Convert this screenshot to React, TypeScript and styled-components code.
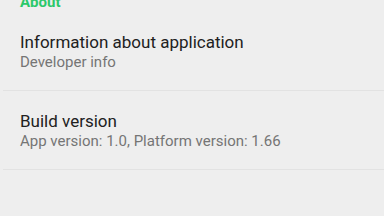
import styled, { createGlobalStyle } from "styled-components"

const GlobalStyle = createGlobalStyle`
    html, body {
        margin: 0;
        padding: 0;
        background-color: #eeeeee;
        font-family: Roboto, "Noto Sans", sans-serif;
        overflow: hidden;
    }
`

const items = [
    { title: "Information about application", subtitle: "Developer info" },
    { title: "Build version", subtitle: "App version: 1.0, Platform version: 1.66" },
]

const App = () => {
    return (
        <>
            <GlobalStyle />
            <StyledSettings>
                <SectionHeader>About</SectionHeader>
                {items.map((item) => (
                    <ListItem key={item.title}>
                        <ItemTitle>{item.title}</ItemTitle>
                        <ItemSubtitle>{item.subtitle}</ItemSubtitle>
                    </ListItem>
                ))}
            </StyledSettings>
        </>
    )
}

// the list is scrolled a little, so the section header is cut at the top
const StyledSettings = styled.div`
    display: flex;
    flex-direction: column;
    width: 384px;
    height: 216px;
    margin-top: -8px;
`

const SectionHeader = styled.div`
    color: #2bc86a;
    font-size: 15px;
    font-weight: 700;
    line-height: 20px;
    padding: 0 20px;
`

const ListItem = styled.div`
    display: flex;
    flex-direction: column;
    gap: 1px;
    padding: 20px 20px 19px 17px;
    margin-left: 3px;
    border-bottom: 1px solid #e2e2e2;
`

const ItemTitle = styled.div`
    color: #212121;
    font-size: 17px;
    line-height: 20px;
`

const ItemSubtitle = styled.div`
    color: #757575;
    font-size: 15px;
    line-height: 18px;
`

export default App
